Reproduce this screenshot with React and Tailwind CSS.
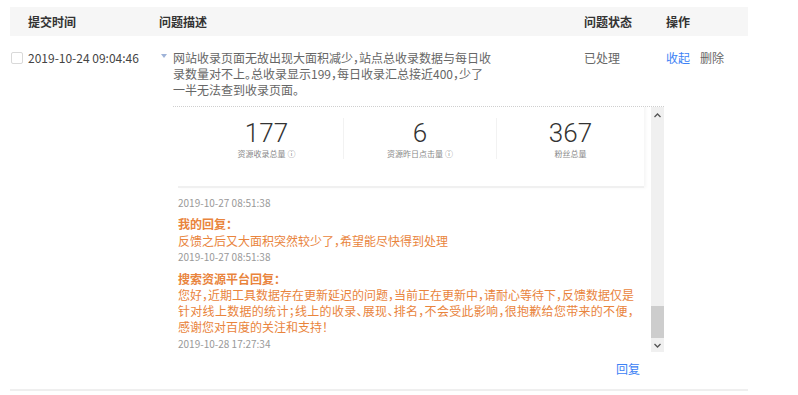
export default function App() {
  const orange = "text-[#e9843c]";
  return (
    <div className="w-[798px] h-[395px] bg-white font-['Noto_Sans_CJK_SC',sans-serif] text-[12px] pt-[7px] pl-[10px] overflow-hidden [font-feature-settings:'halt']">
      <div className="w-[738px]">
        <div className="flex h-[29px] items-center bg-[#f6f6f6] font-bold text-[#333]">
          <div className="w-[149px] pl-[18px]">提交时间</div>
          <div className="w-[425px]">问题描述</div>
          <div className="w-[82px]">问题状态</div>
          <div>操作</div>
        </div>
        <div className="border-b-2 border-[#efefef]">
          <div className="flex pt-[14px] leading-[16px]">
            <div className="w-[18px] pl-[1px] pt-[2px]">
              <div className="w-[12px] h-[12px] border border-[#d9d9d9] rounded-[2px] bg-white" />
            </div>
            <div className="w-[131px] text-[#444]">2019-10-24 09:04:46</div>
            <div className="w-[425px] flex text-[#666]">
              <div className="w-[14px] pt-[4px] pl-[2px]">
                <svg width="6" height="4" viewBox="0 0 6 4">
                  <path d="M0 0 L6 0 L3 4 Z" fill="#9fb3d8" />
                </svg>
              </div>
              <div>
                <div className="whitespace-nowrap">网站收录页面无故出现大面积减少，站点总收录数据与每日收</div>
                <div className="whitespace-nowrap">录数量对不上。总收录显示199，每日收录汇总接近400，少了</div>
                <div className="whitespace-nowrap">一半无法查到收录页面。</div>
              </div>
            </div>
            <div className="w-[82px] text-[#666]">已处理</div>
            <div className="flex gap-[10px]">
              <span className="text-[#3d82f5]">收起</span>
              <span className="text-[#666]">删除</span>
            </div>
          </div>

          <div className="ml-[163px] w-[491px] mt-[8px] h-[246px] border-t border-dotted border-[#cfcfcf] flex overflow-hidden">
            <div className="flex-1 overflow-hidden pl-[5px]">
              <div className="-mt-[20px]">
                <div className="w-[466px] bg-white border-b-2 border-[#f0f0f0] shadow-[2px_0_3px_rgba(0,0,0,0.04)] pl-[12px] pt-[31px] pb-[27px] grid grid-cols-[153px_153px_148px]">
                  <div className="flex flex-col items-center">
                    <div className="h-[30px] leading-[30px] text-[26px] font-light text-[#333] font-['Roboto',sans-serif]">177</div>
                    <div className="mt-[1px] h-[10px] leading-[10px] text-[8px] text-[#888] whitespace-nowrap">资源收录总量 ⓘ</div>
                  </div>
                  <div className="flex flex-col items-center border-l border-[#f2f2f2]">
                    <div className="h-[30px] leading-[30px] text-[26px] font-light text-[#333] font-['Roboto',sans-serif]">6</div>
                    <div className="mt-[1px] h-[10px] leading-[10px] text-[8px] text-[#888] whitespace-nowrap">资源昨日点击量 ⓘ</div>
                  </div>
                  <div className="flex flex-col items-center border-l border-[#f2f2f2]">
                    <div className="h-[30px] leading-[30px] text-[26px] font-light text-[#333] font-['Roboto',sans-serif]">367</div>
                    <div className="mt-[1px] h-[10px] leading-[10px] text-[8px] text-[#888] whitespace-nowrap">粉丝总量</div>
                  </div>
                </div>
                <div className="leading-[16px]">
                  <div className="mt-[7px] text-[10px] text-[#999]">2019-10-27 08:51:38</div>
                  <div className={`mt-[5px] font-bold ${orange}`}>我的回复：</div>
                  <div className={`mt-[1px] ${orange}`}>反馈之后又大面积突然较少了，希望能尽快得到处理</div>
                  <div className="text-[10px] text-[#999]">2019-10-27 08:51:38</div>
                  <div className={`mt-[6px] font-bold ${orange}`}>搜索资源平台回复：</div>
                  <div className={orange}>
                    <div className="whitespace-nowrap">您好，近期工具数据存在更新延迟的问题，当前正在更新中，请耐心等待下，反馈数据仅是</div>
                    <div className="whitespace-nowrap tracking-[0.3px]">针对线上数据的统计；线上的收录、展现、排名，不会受此影响，很抱歉给您带来的不便，</div>
                    <div className="whitespace-nowrap">感谢您对百度的关注和支持！</div>
                  </div>
                  <div className="mt-[1px] text-[10px] text-[#999]">2019-10-28 17:27:34</div>
                </div>
              </div>
            </div>
            <div className="w-[13px] bg-[#f0f0f0] flex flex-col">
              <div className="h-[16px] flex items-center justify-center">
                <svg width="7" height="5" viewBox="0 0 7 5">
                  <path d="M0.5 4 L3.5 1 L6.5 4" fill="none" stroke="#555" strokeWidth="1.3" />
                </svg>
              </div>
              <div className="flex-1 flex flex-col justify-end">
                <div className="h-[32px] bg-[#cdcdcd]" />
              </div>
              <div className="h-[14px] flex items-center justify-center">
                <svg width="7" height="5" viewBox="0 0 7 5">
                  <path d="M0.5 1 L3.5 4 L6.5 1" fill="none" stroke="#555" strokeWidth="1.3" />
                </svg>
              </div>
            </div>
          </div>

          <div className="flex justify-end pr-[108px] pt-[9px] pb-[12px] leading-[16px]">
            <span className="text-[#3d82f5]">回复</span>
          </div>
        </div>
      </div>
    </div>
  );
}
